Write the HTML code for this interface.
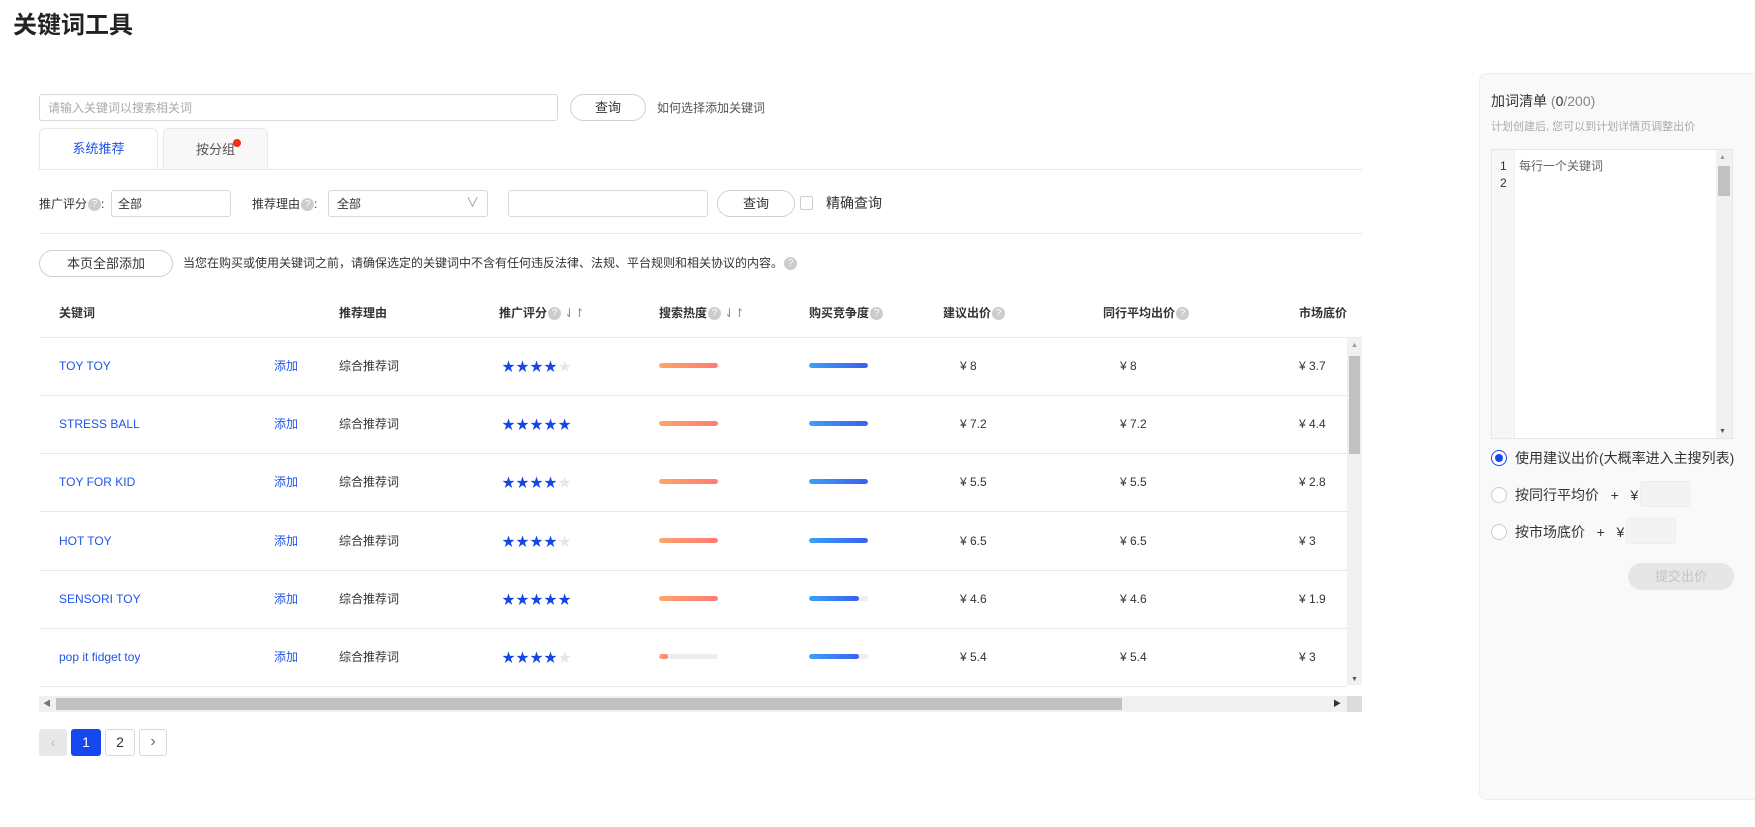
<!DOCTYPE html><html><head><meta charset="utf-8"><style>
*{box-sizing:border-box;margin:0;padding:0}
body{width:1755px;height:827px;background:#fff;font-family:"Liberation Sans","Noto Sans CJK SC",sans-serif;font-size:12px;color:#333;position:relative;overflow:hidden}
.a{position:absolute;line-height:16px}
.inp{position:absolute;border:1px solid #d9d9d9;border-radius:3px;background:#fff}
.btn{position:absolute;border:1px solid #d0d0d0;border-radius:14px;background:#fff;text-align:center;font-size:13px;color:#333}
.q{display:inline-block;width:13px;height:13px;border-radius:50%;background:#ccc;color:#fff;font-size:10px;line-height:13px;text-align:center;vertical-align:top;margin-top:2px;margin-left:1px;font-weight:normal}
.hl{position:absolute;height:1px;background:#e8e8e8}
.th{position:absolute;top:305px;font-size:12px;color:#333;font-weight:bold;line-height:16px}
.cell{position:absolute;font-size:12px;line-height:16px}
.blue{color:#1f54e8}
.star{font-size:13px;letter-spacing:1px}
.bar{position:absolute;width:59px;height:5px;border-radius:3px;background:#eee;overflow:hidden}
.bar i{display:block;height:100%;border-radius:3px}
.h i{background:linear-gradient(90deg,#ffa36b,#ff7b74)}
.c i{background:linear-gradient(90deg,#3ba1f5,#3b5ff0)}
.radio{position:absolute;width:16px;height:16px;border-radius:50%;border:1px solid #ccc;background:#fff}
</style></head><body>
<div class="a" style="left:13px;top:11px;font-size:24px;line-height:30px;font-weight:bold;color:#222">关键词工具</div>

<div class="inp" style="left:39px;top:94px;width:519px;height:27px;padding:5px 8px;color:#aaa;font-size:12px;line-height:16px">请输入关键词以搜索相关词</div>
<div class="btn" style="left:570px;top:94px;width:76px;height:27px;line-height:25px">查询</div>
<div class="a" style="left:657px;top:100px;font-size:12px;color:#555">如何选择添加关键词</div>

<div class="a" style="left:39px;top:128px;width:119px;height:42px;border:1px solid #e8e8e8;border-bottom:none;border-radius:6px 6px 0 0;background:#fff;text-align:center;line-height:40px;color:#1f54e8;font-size:13px">系统推荐</div>
<div class="a" style="left:163px;top:128px;width:105px;height:41px;border:1px solid #e8e8e8;border-bottom:none;border-radius:6px 6px 0 0;background:#f8f8f8;text-align:center;line-height:42px;color:#555;font-size:13px">按分组</div>
<div class="a" style="left:233px;top:139px;width:8px;height:8px;border-radius:50%;background:#f0300f"></div>
<div class="hl" style="left:39px;top:169px;width:1323px"></div>

<div class="a" style="left:39px;top:196px;font-size:12px">推广评分<span class="q">?</span>:</div>
<div class="inp" style="left:111px;top:190px;width:120px;height:27px;padding:5px 6px;font-size:12px;line-height:16px">全部</div>
<div class="a" style="left:252px;top:196px;font-size:12px">推荐理由<span class="q">?</span>:</div>
<div class="inp" style="left:328px;top:190px;width:160px;height:27px;padding:5px 8px;font-size:12px;line-height:16px">全部<span style="position:absolute;right:8px;top:4px;color:#999;font-size:13px">∨</span></div>
<div class="inp" style="left:508px;top:190px;width:200px;height:27px"></div>
<div class="btn" style="left:717px;top:190px;width:78px;height:27px;line-height:25px">查询</div>
<div class="a" style="left:800px;top:196px;width:13px;height:14px;border:1px solid #ccc;border-radius:2px"></div>
<div class="a" style="left:826px;top:195px;font-size:14px">精确查询</div>
<div class="hl" style="left:39px;top:233px;width:1323px"></div>

<div class="btn" style="left:39px;top:250px;width:134px;height:27px;line-height:25px">本页全部添加</div>
<div class="a" style="left:183px;top:255px;font-size:12px;color:#333">当您在购买或使用关键词之前，请确保选定的关键词中不含有任何违反法律、法规、平台规则和相关协议的内容。<span class="q">?</span></div>

<div class="th" style="left:59px">关键词</div>
<div class="th" style="left:339px">推荐理由</div>
<div class="th" style="left:499px">推广评分<span class="q">?</span> <span style="color:#888;font-weight:normal">⇃↾</span></div>
<div class="th" style="left:659px">搜索热度<span class="q">?</span> <span style="color:#888;font-weight:normal">⇃↾</span></div>
<div class="th" style="left:809px">购买竞争度<span class="q">?</span></div>
<div class="th" style="left:943px">建议出价<span class="q">?</span></div>
<div class="th" style="left:1103px">同行平均出价<span class="q">?</span></div>
<div class="th" style="left:1299px">市场底价</div>
<div class="hl" style="left:39px;top:337px;width:1323px"></div>

<div id="rows"></div>
<div class="a" style="left:1347px;top:338px;width:15px;height:347px;background:#f1f1f1"></div>
<div class="a" style="left:1349px;top:356px;width:11px;height:98px;background:#c1c1c1"></div>
<div class="a" style="left:1351px;top:338px;font-size:7px;color:#999">▲</div>
<div class="a" style="left:1351px;top:672px;font-size:7px;color:#555">▼</div>

<div class="a" style="left:39px;top:696px;width:1323px;height:16px;background:#f1f1f1"></div>
<div class="a" style="left:56px;top:698px;width:1066px;height:12px;background:#c1c1c1"></div>
<div class="a" style="left:43px;top:696px;font-size:8px;color:#777">◀</div>
<div class="a" style="left:1333px;top:696px;font-size:8px;color:#333">▶</div>
<div class="a" style="left:1347px;top:696px;width:15px;height:16px;background:#dcdcdc"></div>

<div class="a" style="left:39px;top:729px;width:28px;height:27px;background:#e8e8e8;border-radius:3px;text-align:center;line-height:27px;color:#bbb;font-size:14px">‹</div>
<div class="a" style="left:71px;top:729px;width:30px;height:27px;background:#1547f0;border-radius:3px;text-align:center;line-height:27px;color:#fff;font-size:14px">1</div>
<div class="a" style="left:105px;top:729px;width:30px;height:27px;border:1px solid #d9d9d9;border-radius:3px;text-align:center;line-height:25px;color:#333;font-size:14px">2</div>
<div class="a" style="left:139px;top:729px;width:28px;height:27px;border:1px solid #d9d9d9;border-radius:3px;text-align:center;line-height:24px;color:#666;font-size:16px">›</div>

<div class="a" style="left:1479px;top:73px;width:290px;height:727px;background:#f9f9f9;border:1px solid #ececec;border-radius:8px"></div>
<div class="a" style="left:1491px;top:93px;font-size:14px;color:#333">加词清单 <span style="color:#888">(</span>0<span style="color:#888">/200)</span></div>
<div class="a" style="left:1491px;top:119px;font-size:11px;color:#aaa">计划创建后, 您可以到计划详情页调整出价</div>
<div class="a" style="left:1491px;top:149px;width:242px;height:290px;border:1px solid #e6e6e6;background:#fff"></div>
<div class="a" style="left:1492px;top:150px;width:23px;height:288px;background:#f7f7f7;border-right:1px solid #eee;font-size:12px;line-height:17px;padding:8px 0 0 8px;color:#333">1<br>2</div>
<div class="a" style="left:1519px;top:158px;font-size:12px;color:#666">每行一个关键词</div>
<div class="a" style="left:1716px;top:150px;width:16px;height:288px;background:#f1f1f1"></div>
<div class="a" style="left:1718px;top:166px;width:12px;height:30px;background:#c1c1c1"></div>
<div class="a" style="left:1719px;top:150px;font-size:7px;color:#999">▲</div>
<div class="a" style="left:1719px;top:424px;font-size:7px;color:#555">▼</div>

<div class="radio" style="left:1491px;top:450px;border-color:#1547f0"><div class="a" style="left:3px;top:3px;width:8px;height:8px;border-radius:50%;background:#1547f0"></div></div>
<div class="a" style="left:1515px;top:450px;font-size:14px">使用建议出价(大概率进入主搜列表)</div>
<div class="radio" style="left:1491px;top:487px"></div>
<div class="a" style="left:1515px;top:487px;font-size:14px">按同行平均价 &nbsp; + &nbsp; ¥</div>
<div class="a" style="left:1640px;top:481px;width:50px;height:26px;background:#f3f3f3;border:1px solid #eee;border-radius:3px"></div>
<div class="radio" style="left:1491px;top:524px"></div>
<div class="a" style="left:1515px;top:524px;font-size:14px">按市场底价 &nbsp; + &nbsp; ¥</div>
<div class="a" style="left:1626px;top:518px;width:50px;height:26px;background:#f3f3f3;border:1px solid #eee;border-radius:3px"></div>
<div class="a" style="left:1628px;top:563px;width:106px;height:27px;background:#e6e6e6;border-radius:14px;text-align:center;line-height:27px;color:#c4c4c4;font-size:13px">提交出价</div>

<script>
var d=[["TOY TOY",4,100,100,"8","8","3.7"],["STRESS BALL",5,100,100,"7.2","7.2","4.4"],["TOY FOR KID",4,100,100,"5.5","5.5","2.8"],["HOT TOY",4,100,100,"6.5","6.5","3"],["SENSORI TOY",5,100,85,"4.6","4.6","1.9"],["pop it fidget toy",4,15,85,"5.4","5.4","3"]];
var h="";
d.forEach(function(r,i){var y=338+i*58.2;var c=Math.round(y+28);
h+='<div class="cell blue" style="left:59px;top:'+(c-8)+'px">'+r[0]+'</div>';
h+='<div class="cell blue" style="left:274px;top:'+(c-8)+'px">添加</div>';
h+='<div class="cell" style="left:339px;top:'+(c-8)+'px">综合推荐词</div>';
var s='';for(var k=0;k<5;k++)s+='<span style="color:'+(k<r[1]?'#1547e6':'#e6e6e6')+'">★</span>';
h+='<div class="cell star" style="left:502px;top:'+(c-7)+'px">'+s+'</div>';
h+='<div class="bar h" style="left:659px;top:'+(c-3)+'px"><i style="width:'+r[2]+'%"></i></div>';
h+='<div class="bar c" style="left:809px;top:'+(c-3)+'px"><i style="width:'+r[3]+'%"></i></div>';
h+='<div class="cell" style="left:960px;top:'+(c-8)+'px">¥ '+r[4]+'</div>';
h+='<div class="cell" style="left:1120px;top:'+(c-8)+'px">¥ '+r[5]+'</div>';
h+='<div class="cell" style="left:1299px;top:'+(c-8)+'px">¥ '+r[6]+'</div>';
h+='<div class="hl" style="left:39px;top:'+Math.round(y+57)+'px;width:1308px"></div>';});
document.getElementById("rows").innerHTML=h;
</script>
</body></html>
